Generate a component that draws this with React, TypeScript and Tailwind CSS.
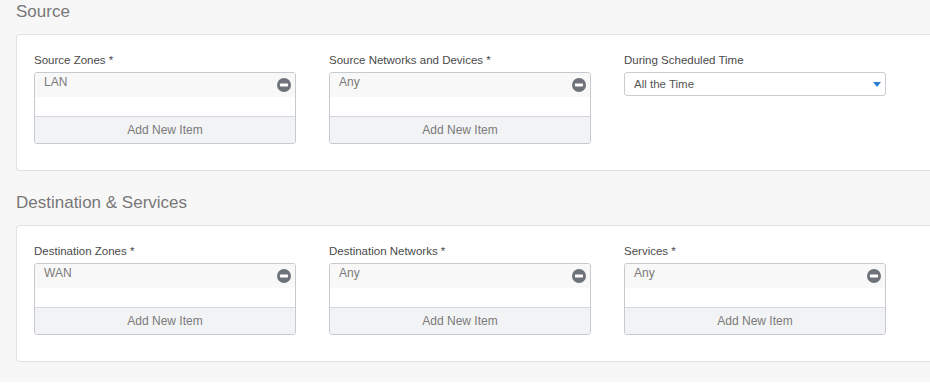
import React from "react";

function MinusIcon() {
  return (
    <svg width="14" height="14" viewBox="0 0 14 14" className="block">
      <circle cx="7" cy="7" r="7" fill="#6e737b" />
      <rect x="3" y="5.6" width="8" height="2.8" rx="0.6" fill="#ffffff" />
    </svg>
  );
}

function ListBox({ label, value }: { label: string; value: string }) {
  return (
    <div className="flex flex-col w-[262px]">
      <div className="text-[11.5px] leading-[16px] text-[#4a4a4a] mb-[4px]">{label}</div>
      <div className="border border-[#c6c9cd] rounded-[3px] h-[72px] flex flex-col overflow-hidden">
        <div className="h-[24px] bg-[#f8f8f8] flex items-start justify-between pl-[9px] pr-[4px]">
          <span className="text-[12px] leading-[16px] text-[#7a7a7a] mt-[1px]">{value}</span>
          <span className="mt-[5px]">
            <MinusIcon />
          </span>
        </div>
        <div className="h-[19px] bg-white"></div>
        <div className="flex-1 border-t border-[#d5d8dc] bg-[#f2f3f5] flex items-center justify-center text-[12px] text-[#7a7a7a]">
          Add New Item
        </div>
      </div>
    </div>
  );
}

function SelectBox({ label, value }: { label: string; value: string }) {
  return (
    <div className="flex flex-col w-[262px]">
      <div className="text-[11.5px] leading-[16px] text-[#4a4a4a] mb-[4px]">{label}</div>
      <div className="border border-[#c9cdd2] rounded-[3px] h-[24px] bg-white flex items-center justify-between pl-[9px] pr-[4px]">
        <span className="text-[11.5px] text-[#555555] mt-[1px]">{value}</span>
        <svg width="8" height="5" viewBox="0 0 8 5" className="block">
          <path d="M0 0 H8 L4 5 Z" fill="#2a7fd0" />
        </svg>
      </div>
    </div>
  );
}

function Card({ children }: { children: React.ReactNode }) {
  return (
    <div className="bg-white border border-r-0 border-[#e2e2e2] rounded-l-[4px] pl-[17px] pt-[17px] pb-[26px]">
      <div className="flex gap-[33px]">{children}</div>
    </div>
  );
}

export default function App() {
  return (
    <div className="bg-white pb-[7px]" style={{ fontFamily: '"Liberation Sans", Arial, sans-serif' }}>
      <div className="bg-[#f7f7f7] pl-4 pb-[20px] pt-[1px]">
        <h2 className="text-[17px] leading-[22px] text-[#777777] mb-[11px] font-normal">Source</h2>
        <Card>
          <ListBox label="Source Zones *" value="LAN" />
          <ListBox label="Source Networks and Devices *" value="Any" />
          <SelectBox label="During Scheduled Time" value="All the Time" />
        </Card>
        <h2 className="text-[17px] leading-[22px] text-[#777777] mt-[21px] mb-[11px] font-normal">
          Destination &amp; Services
        </h2>
        <Card>
          <ListBox label="Destination Zones *" value="WAN" />
          <ListBox label="Destination Networks *" value="Any" />
          <ListBox label="Services *" value="Any" />
        </Card>
      </div>
    </div>
  );
}
